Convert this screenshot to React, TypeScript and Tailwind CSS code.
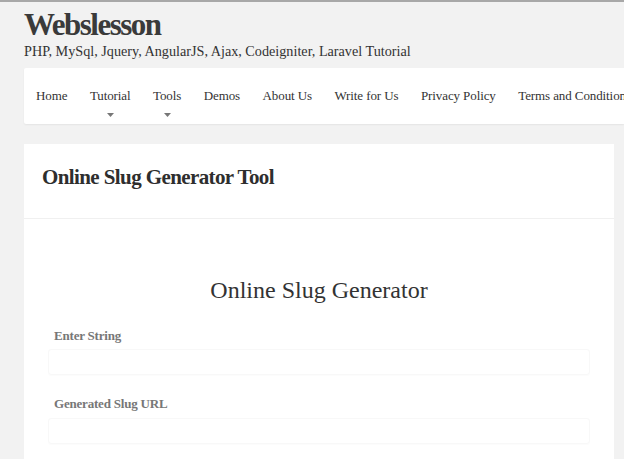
import React from "react";

const serif = { fontFamily: '"Liberation Serif", "DejaVu Serif", serif' };

function Caret() {
  return (
    <svg width="7" height="4" viewBox="0 0 7 4" className="block">
      <path d="M0 0 L7 0 L3.5 4 Z" fill="#777" />
    </svg>
  );
}

export default function App() {
  const nav = [
    { t: "Home" },
    { t: "Tutorial", c: true },
    { t: "Tools", c: true },
    { t: "Demos" },
    { t: "About Us" },
    { t: "Write for Us" },
    { t: "Privacy Policy" },
    { t: "Terms and Conditions" },
  ];
  return (
    <div className="w-[624px] h-[459px] overflow-hidden bg-[#f2f2f2] border-t-2 border-[#a8a8a8]" style={serif}>
      <div className="pl-[24px] pt-[6px]">
        <div className="text-[31px] font-bold text-[#3a3a3a] tracking-[-1.5px] leading-[34px]">Webslesson</div>
        <div className="text-[14.2px] text-[#333] leading-[18px]">
          PHP, MySql, Jquery, AngularJS, Ajax, Codeigniter, Laravel Tutorial
        </div>
      </div>
      <div className="ml-[24px] mt-[8px] h-[56px] bg-white rounded-l-[2px] shadow-[0_1px_2px_rgba(0,0,0,0.06)] flex pl-[12px] whitespace-nowrap overflow-hidden">
        {nav.map((n) => (
          <div key={n.t} className="relative flex flex-col items-center pt-[19px] mr-[22.5px] text-[13px] text-[#333] leading-[17px] tracking-[-0.1px]">
            <span>{n.t}</span>
            {n.c && (
              <div className="mt-[9px]">
                <Caret />
              </div>
            )}
          </div>
        ))}
      </div>
      <div className="ml-[24px] mt-[20px] w-[590px] bg-white h-[400px]">
        <div className="h-[75px] border-b border-[#f0f0f0] pl-[18px] pt-[20px]">
          <div className="text-[21px] font-bold text-[#2e2e2e] leading-[26px] tracking-[-0.6px]">Online Slug Generator Tool</div>
        </div>
        <div className="pt-[57px] text-center text-[24px] text-[#333] leading-[28px]">Online Slug Generator</div>
        <div className="px-[24px] pt-[24px]">
          <div className="pl-[6px] text-[13px] font-bold text-[#777] leading-[16px] tracking-[-0.2px]">Enter String</div>
          <div className="mt-[5px] h-[26px] border border-[#f8f8f8] rounded-[3px] shadow-[0_1px_1px_rgba(0,0,0,0.015)]" />
          <div className="mt-[21px] pl-[6px] text-[13px] font-bold text-[#777] leading-[16px] tracking-[-0.2px]">Generated Slug URL</div>
          <div className="mt-[6px] h-[26px] border border-[#f8f8f8] rounded-[3px] shadow-[0_1px_1px_rgba(0,0,0,0.015)]" />
        </div>
      </div>
    </div>
  );
}
